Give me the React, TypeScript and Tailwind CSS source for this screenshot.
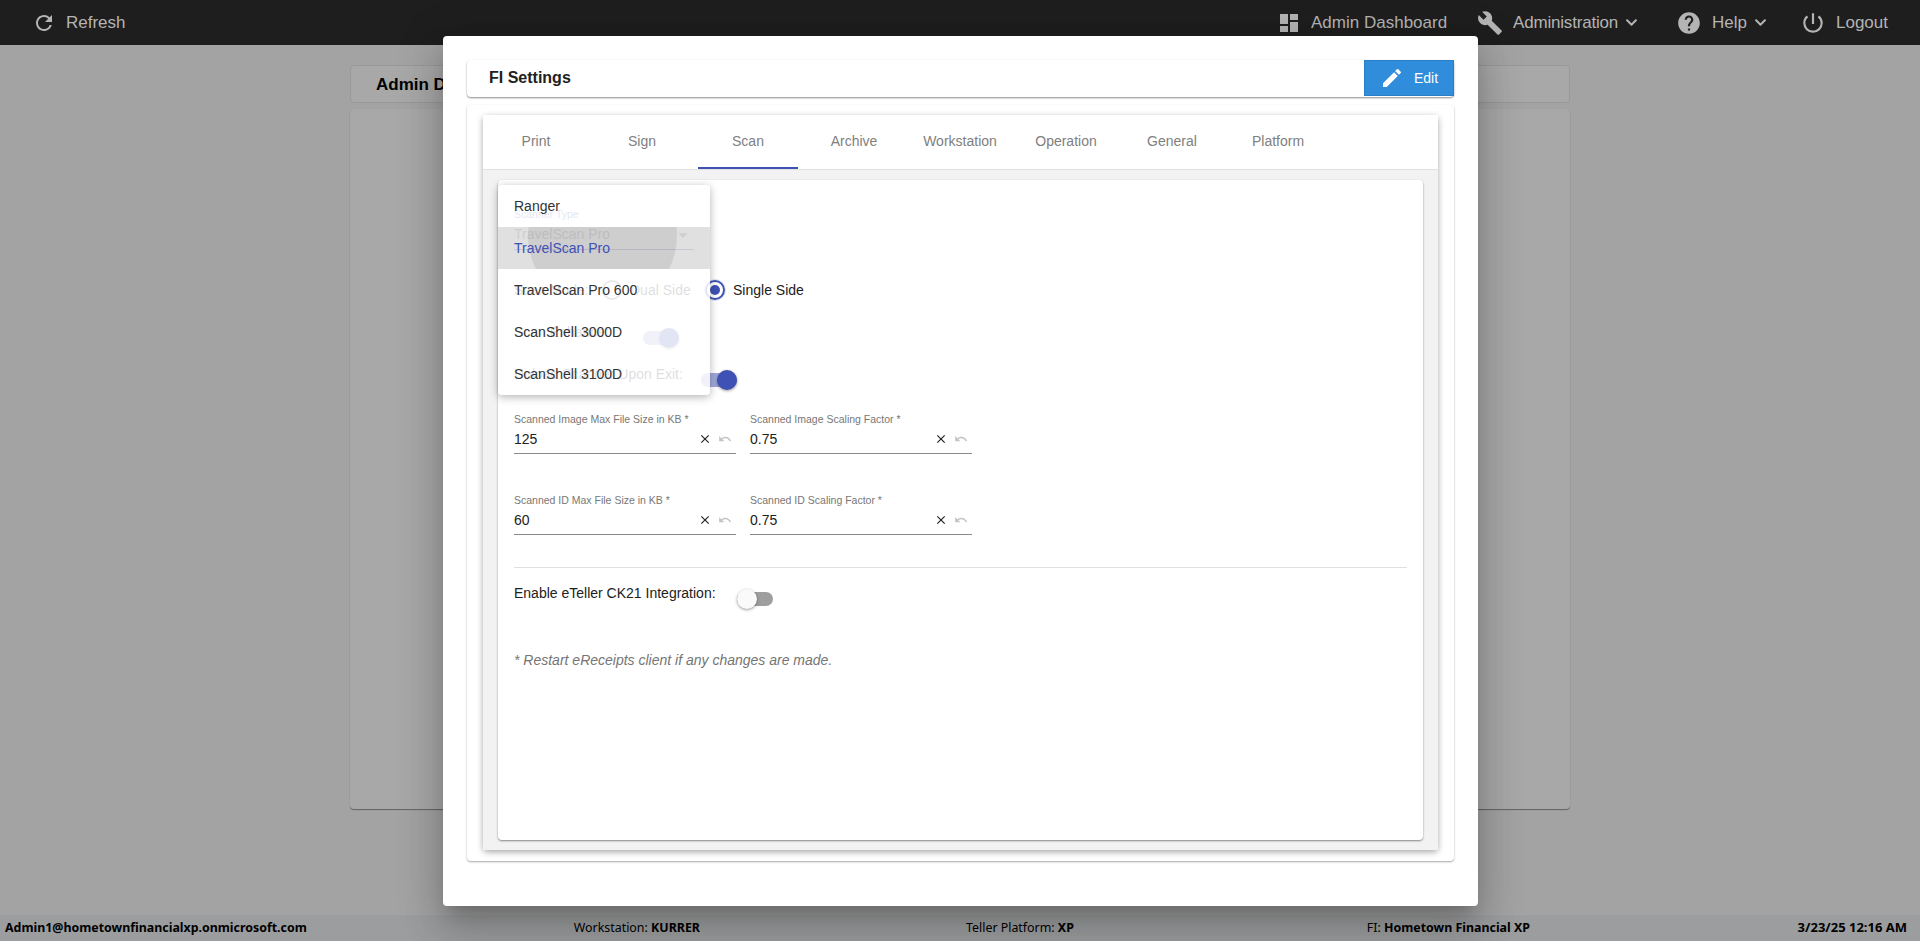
import React from 'react'
import {
  MdRefresh,
  MdDashboard,
  MdBuild,
  MdHelp,
  MdPowerSettingsNew,
  MdEdit,
  MdClose,
  MdUndo,
  MdArrowDropDown,
} from 'react-icons/md'
import { FaChevronDown } from 'react-icons/fa'

const tabs = ['Print', 'Sign', 'Scan', 'Archive', 'Workstation', 'Operation', 'General', 'Platform']
const scanners = ['Ranger', 'TravelScan Pro', 'TravelScan Pro 600', 'ScanShell 3000D', 'ScanShell 3100D']

function Toggle({ on }: { on: boolean }) {
  return (
    <div className={`relative mt-[9px] h-[14px] w-9 rounded-full ${on ? 'bg-[#9fa8da]' : 'bg-[#9e9e9e]'}`}>
      <div
        className={`absolute top-[-3px] h-5 w-5 rounded-full shadow-[0_1px_3px_rgba(0,0,0,0.4)] ${on ? 'right-0 bg-[#3f51b5]' : 'left-0 bg-[#fafafa]'}`}
      />
    </div>
  )
}

function Radio({ checked, label }: { checked: boolean; label: string }) {
  return (
    <div className="flex items-center">
      <div className={`flex h-5 w-5 items-center justify-center rounded-full border-2 ${checked ? 'border-[#3f51b5] shadow-[0_0_0_1px_rgba(63,81,181,0.15)]' : 'border-[#757575]'}`}>
        {checked && <div className="h-[10px] w-[10px] rounded-full bg-[#3f51b5]" />}
      </div>
      <span className="ml-[8px] text-sm leading-5 text-[#212121]">{label}</span>
    </div>
  )
}

function Field({ label, value }: { label: string; value: string }) {
  return (
    <div className="w-[222px]">
      <div className="text-[10.5px] leading-3 text-[#777777]">{label}</div>
      <div className="flex h-[29px] items-center border-b border-[#8a8a8a]">
        <span className="flex-1 text-sm leading-5 text-[#212121]">{value}</span>
        <MdClose className="mr-[4px] text-[14px] text-[#212121]" />
        <MdUndo className="ml-[2px] mr-[4px] text-[14px] text-[#c4c4c4]" />
      </div>
    </div>
  )
}

function NavItem({ icon, label, caret, tight }: { icon: React.ReactNode; label: string; caret?: boolean; tight?: boolean }) {
  return (
    <div className="flex items-center">
      {icon}
      <span className={`ml-[10px] text-[17px] text-[#b4b4b4] ${tight ? 'tracking-[-0.2px]' : ''}`}>{label}</span>
      {caret && <FaChevronDown className="ml-[7px] text-[13px] text-[#b4b4b4]" />}
    </div>
  )
}

export default function App() {
  return (
    <div className="relative flex h-[941px] flex-col overflow-hidden bg-[#a3a3a3] font-['Liberation_Sans',sans-serif]">
      {/* top bar */}
      <header className="flex h-[45px] shrink-0 items-center justify-between bg-[#1e1e1e] pl-[32px] pr-[32px]">
        <NavItem icon={<MdRefresh className="text-[24px] text-[#b4b4b4]" />} label="Refresh" />
        <div className="flex items-center">
          <NavItem icon={<MdDashboard className="text-[24px] text-[#b4b4b4]" />} label="Admin Dashboard" />
          <div className="ml-[30px]">
            <NavItem icon={<MdBuild className="text-[26px] text-[#b4b4b4]" />} label="Administration" caret tight />
          </div>
          <div className="ml-[38px]">
            <NavItem icon={<MdHelp className="text-[26px] text-[#b4b4b4]" />} label="Help" caret />
          </div>
          <div className="ml-[33px]">
            <NavItem icon={<MdPowerSettingsNew className="text-[26px] text-[#b4b4b4]" />} label="Logout" />
          </div>
        </div>
      </header>

      {/* page behind the dialog */}
      <main className="flex flex-1 flex-col gap-[6px] pl-[350px] pr-[350px] pt-5">
        <div className="flex h-[38px] items-center rounded border border-[#989898] bg-[#a8a8a8] px-[25px] pt-[2px]">
          <span className="text-[17px] font-bold text-black">Admin Dashboard</span>
        </div>
        <div className="h-[700px] rounded bg-[#a8a8a8] shadow-[0_1px_1px_rgba(0,0,0,0.4)]" />
      </main>

      {/* status bar */}
      <footer className="flex h-[26px] shrink-0 items-center bg-[#9c9d9e] pl-[5px] pr-[13px] font-['Noto_Sans',sans-serif] text-[12.4px] text-black">
        <b>Admin1@hometownfinancialxp.onmicrosoft.com</b>
        <span className="ml-[267px]">
          Workstation: <b>KURRER</b>
        </span>
        <span className="ml-[266px]">
          Teller Platform: <b>XP</b>
        </span>
        <span className="ml-[293px]">
          FI: <b>Hometown Financial XP</b>
        </span>
        <b className="ml-auto text-[13px]">3/23/25 12:16 AM</b>
      </footer>

      {/* dialog */}
      <div className="absolute left-[443px] top-9 h-[870px] w-[1035px] rounded bg-white px-6 pt-6 shadow-[0_11px_15px_-7px_rgba(0,0,0,0.2),0_24px_38px_3px_rgba(0,0,0,0.14),0_9px_46px_8px_rgba(0,0,0,0.12)]">
        <div className="flex h-[37px] items-start justify-between rounded shadow-[0_1px_2px_rgba(0,0,0,0.45)]">
          <span className="ml-[22px] mt-[8px] text-base font-bold leading-5 text-[#212121]">FI Settings</span>
          <button className="flex h-9 w-[90px] items-center justify-center gap-[10px] border border-[#2a7fc7] bg-[#2f8ddc] text-sm text-white">
            <MdEdit className="text-[24px]" />
            Edit
          </button>
        </div>

        <div className="mt-2 h-[756px] rounded px-4 pb-[11px] pt-[10px] shadow-[0_1px_2px_rgba(0,0,0,0.35)]">
          <div className="flex h-full flex-col rounded-sm shadow-[0_2px_6px_rgba(0,0,0,0.35)]">
            <div className="flex h-[55px] shrink-0 border-b border-[#e0e0e0] bg-white">
              {tabs.map((tab) => (
                <div key={tab} className="flex h-[54px] w-[106px] flex-col items-center">
                  <span className="flex-1 pt-[16px] text-sm leading-5 text-[#808080]">{tab}</span>
                  {tab === 'Scan' && <div className="h-[2px] w-[100px] bg-[#3f51b5]" />}
                </div>
              ))}
            </div>

            <div className="flex-1 bg-[#f2f2f2] px-[15px] py-[10px]">
              <div className="relative h-full rounded bg-white px-4 pt-7 shadow-[0_1px_2px_rgba(0,0,0,0.45)]">
                <div className="w-[180px]">
                  <div className="text-[10.5px] leading-3 text-[#3f51b5]">Scanner Type</div>
                  <div className="flex h-[30px] items-start border-b border-[#3f51b5] pt-1">
                    <span className="flex-1 text-sm leading-5 text-[#757575]">TravelScan Pro</span>
                    <MdArrowDropDown className="text-[22px] text-[#757575]" />
                  </div>
                </div>

                <div className="mt-[30px] flex h-5 items-center">
                  <span className="w-[88px] text-sm leading-5 text-[#212121]">Scan Mode:</span>
                  <div className="w-[103px]">
                    <Radio checked={false} label="Dual Side" />
                  </div>
                  <Radio checked label="Single Side" />
                </div>

                <div className="mt-[22px] flex h-5 items-start">
                  <span className="w-[129px] text-sm leading-5 text-[#212121]">Scan Enhance:</span>
                  <Toggle on />
                </div>
                <div className="mt-[22px] flex h-5 items-start">
                  <span className="w-[187px] text-sm leading-5 text-[#212121]">Unload Scanner Upon Exit:</span>
                  <Toggle on />
                </div>

                <div className="mt-[29px] flex gap-[14px]">
                  <Field label="Scanned Image Max File Size in KB *" value="125" />
                  <Field label="Scanned Image Scaling Factor *" value="0.75" />
                </div>
                <div className="mt-10 flex gap-[14px]">
                  <Field label="Scanned ID Max File Size in KB *" value="60" />
                  <Field label="Scanned ID Scaling Factor *" value="0.75" />
                </div>

                <div className="mt-8 h-px bg-[#e0e0e0]" />

                <div className="mt-[15px] flex h-5 items-start">
                  <span className="w-[223px] text-sm leading-5 text-[#212121]">Enable eTeller CK21 Integration:</span>
                  <Toggle on={false} />
                </div>

                <p className="mt-[47px] text-sm italic leading-5 text-[#757575]">* Restart eReceipts client if any changes are made.</p>

                {/* scanner type menu, caught while fading in */}
                <div className="absolute left-0 top-[5px] w-[212px] rounded bg-white/85 shadow-[0_2px_8px_rgba(0,0,0,0.3)]">
                  {scanners.map((name) => (
                    <div
                      key={name}
                      className={`relative flex h-[42px] items-center overflow-hidden px-4 text-sm ${name === 'TravelScan Pro' ? 'bg-black/12 text-[#3f51b5]' : 'text-[#333333]'}`}
                    >
                      {name === 'TravelScan Pro' && (
                        <div className="absolute left-[30px] top-[-66px] h-[149px] w-[149px] rounded-full bg-black/8" />
                      )}
                      <span className="relative">{name}</span>
                    </div>
                  ))}
                </div>
              </div>
            </div>
          </div>
        </div>
      </div>
    </div>
  )
}
